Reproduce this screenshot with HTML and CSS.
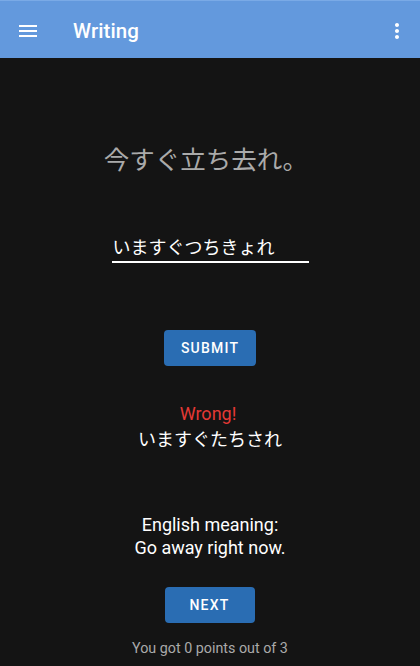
FILE: index.html
```html
<!DOCTYPE html>
<html>
<head>
<meta charset="utf-8">
<link rel="stylesheet" href="styles.css">
</head>
<body>
<header class="appbar">
  <svg class="menu" width="24" height="24" viewBox="0 0 24 24"><path d="M3 18h18v-2H3v2zm0-5h18v-2H3v2zm0-7v2h18V6H3z" fill="#fff"/></svg>
  <div class="title">Writing</div>
  <svg class="more" width="24" height="24" viewBox="0 0 24 24"><path d="M12 8c1.1 0 2-.9 2-2s-.9-2-2-2-2 .9-2 2 .9 2 2 2zm0 2c-1.1 0-2 .9-2 2s.9 2 2 2 2-.9 2-2-.9-2-2-2zm0 6c-1.1 0-2 .9-2 2s.9 2 2 2 2-.9 2-2-.9-2-2-2z" fill="#fff"/></svg>
</header>
<main class="content">
  <div class="prompt">今すぐ立ち去れ。</div>
  <div class="field"><span>いますぐつちきょれ</span></div>
  <button class="btn submit">SUBMIT</button>
  <div class="result">
    <div class="wrong">Wrong!</div>
    <div class="answer">いますぐたちされ</div>
  </div>
  <div class="meaning">English meaning:<br>Go away right now.</div>
  <button class="btn next">NEXT</button>
  <div class="score">You got 0 points out of 3</div>
</main>
</body>
</html>
```
FILE: styles.css
```css
* { box-sizing: border-box; }
html, body { margin: 0; padding: 0; }
body {
  width: 420px;
  height: 666px;
  background: #141414;
  font-family: Roboto, "Noto Sans CJK JP", sans-serif;
  color: #fff;
  overflow: hidden;
}
.appbar {
  height: 58px;
  background: #6399dd;
  border-top: 1px solid #7aaae6;
  display: flex;
  align-items: center;
  padding: 2px 11px 0 16px;
}
.menu { flex: none; }
.title {
  margin-left: 33px;
  font-size: 20.5px;
  font-weight: 500;
  flex: 1;
  letter-spacing: 0.1px;
}
.more { flex: none; }
.content {
  display: flex;
  flex-direction: column;
  align-items: center;
}
.prompt {
  margin-top: 84px;
  font-family: "Noto Sans CJK JP", sans-serif;
  font-size: 25.5px;
  color: #aaaaaa;
  line-height: 32px;
  margin-right: 8px;
}
.field {
  margin-top: 59px;
  width: 197px;
  border-bottom: 2px solid #fff;
  font-family: "Noto Sans CJK JP", sans-serif;
  font-size: 18px;
  line-height: 26px;
  padding-bottom: 2px;
}
.field span { padding-left: 1px; }
.btn {
  border: none;
  background: #2a6db3;
  color: #fff;
  font-family: Roboto, sans-serif;
  font-weight: 500;
  font-size: 14px;
  letter-spacing: 1.2px;
  height: 36px;
  border-radius: 4px;
  padding: 0 16px;
}
.submit { margin-top: 67px; width: 92px; }
.result {
  margin-top: 37px;
  text-align: center;
}
.wrong {
  color: #e53935;
  font-size: 18px;
  line-height: 22px;
  margin-right: 4px;
}
.answer {
  font-family: "Noto Sans CJK JP", sans-serif;
  font-size: 18px;
  line-height: 26px;
}
.meaning {
  margin-top: 62px;
  text-align: center;
  font-size: 18px;
  line-height: 23px;
}
.next { margin-top: 28px; width: 90px; margin-right: 1px; }
.score {
  margin-top: 17px;
  font-size: 14.3px;
  color: #aaaaaa;
}
```
